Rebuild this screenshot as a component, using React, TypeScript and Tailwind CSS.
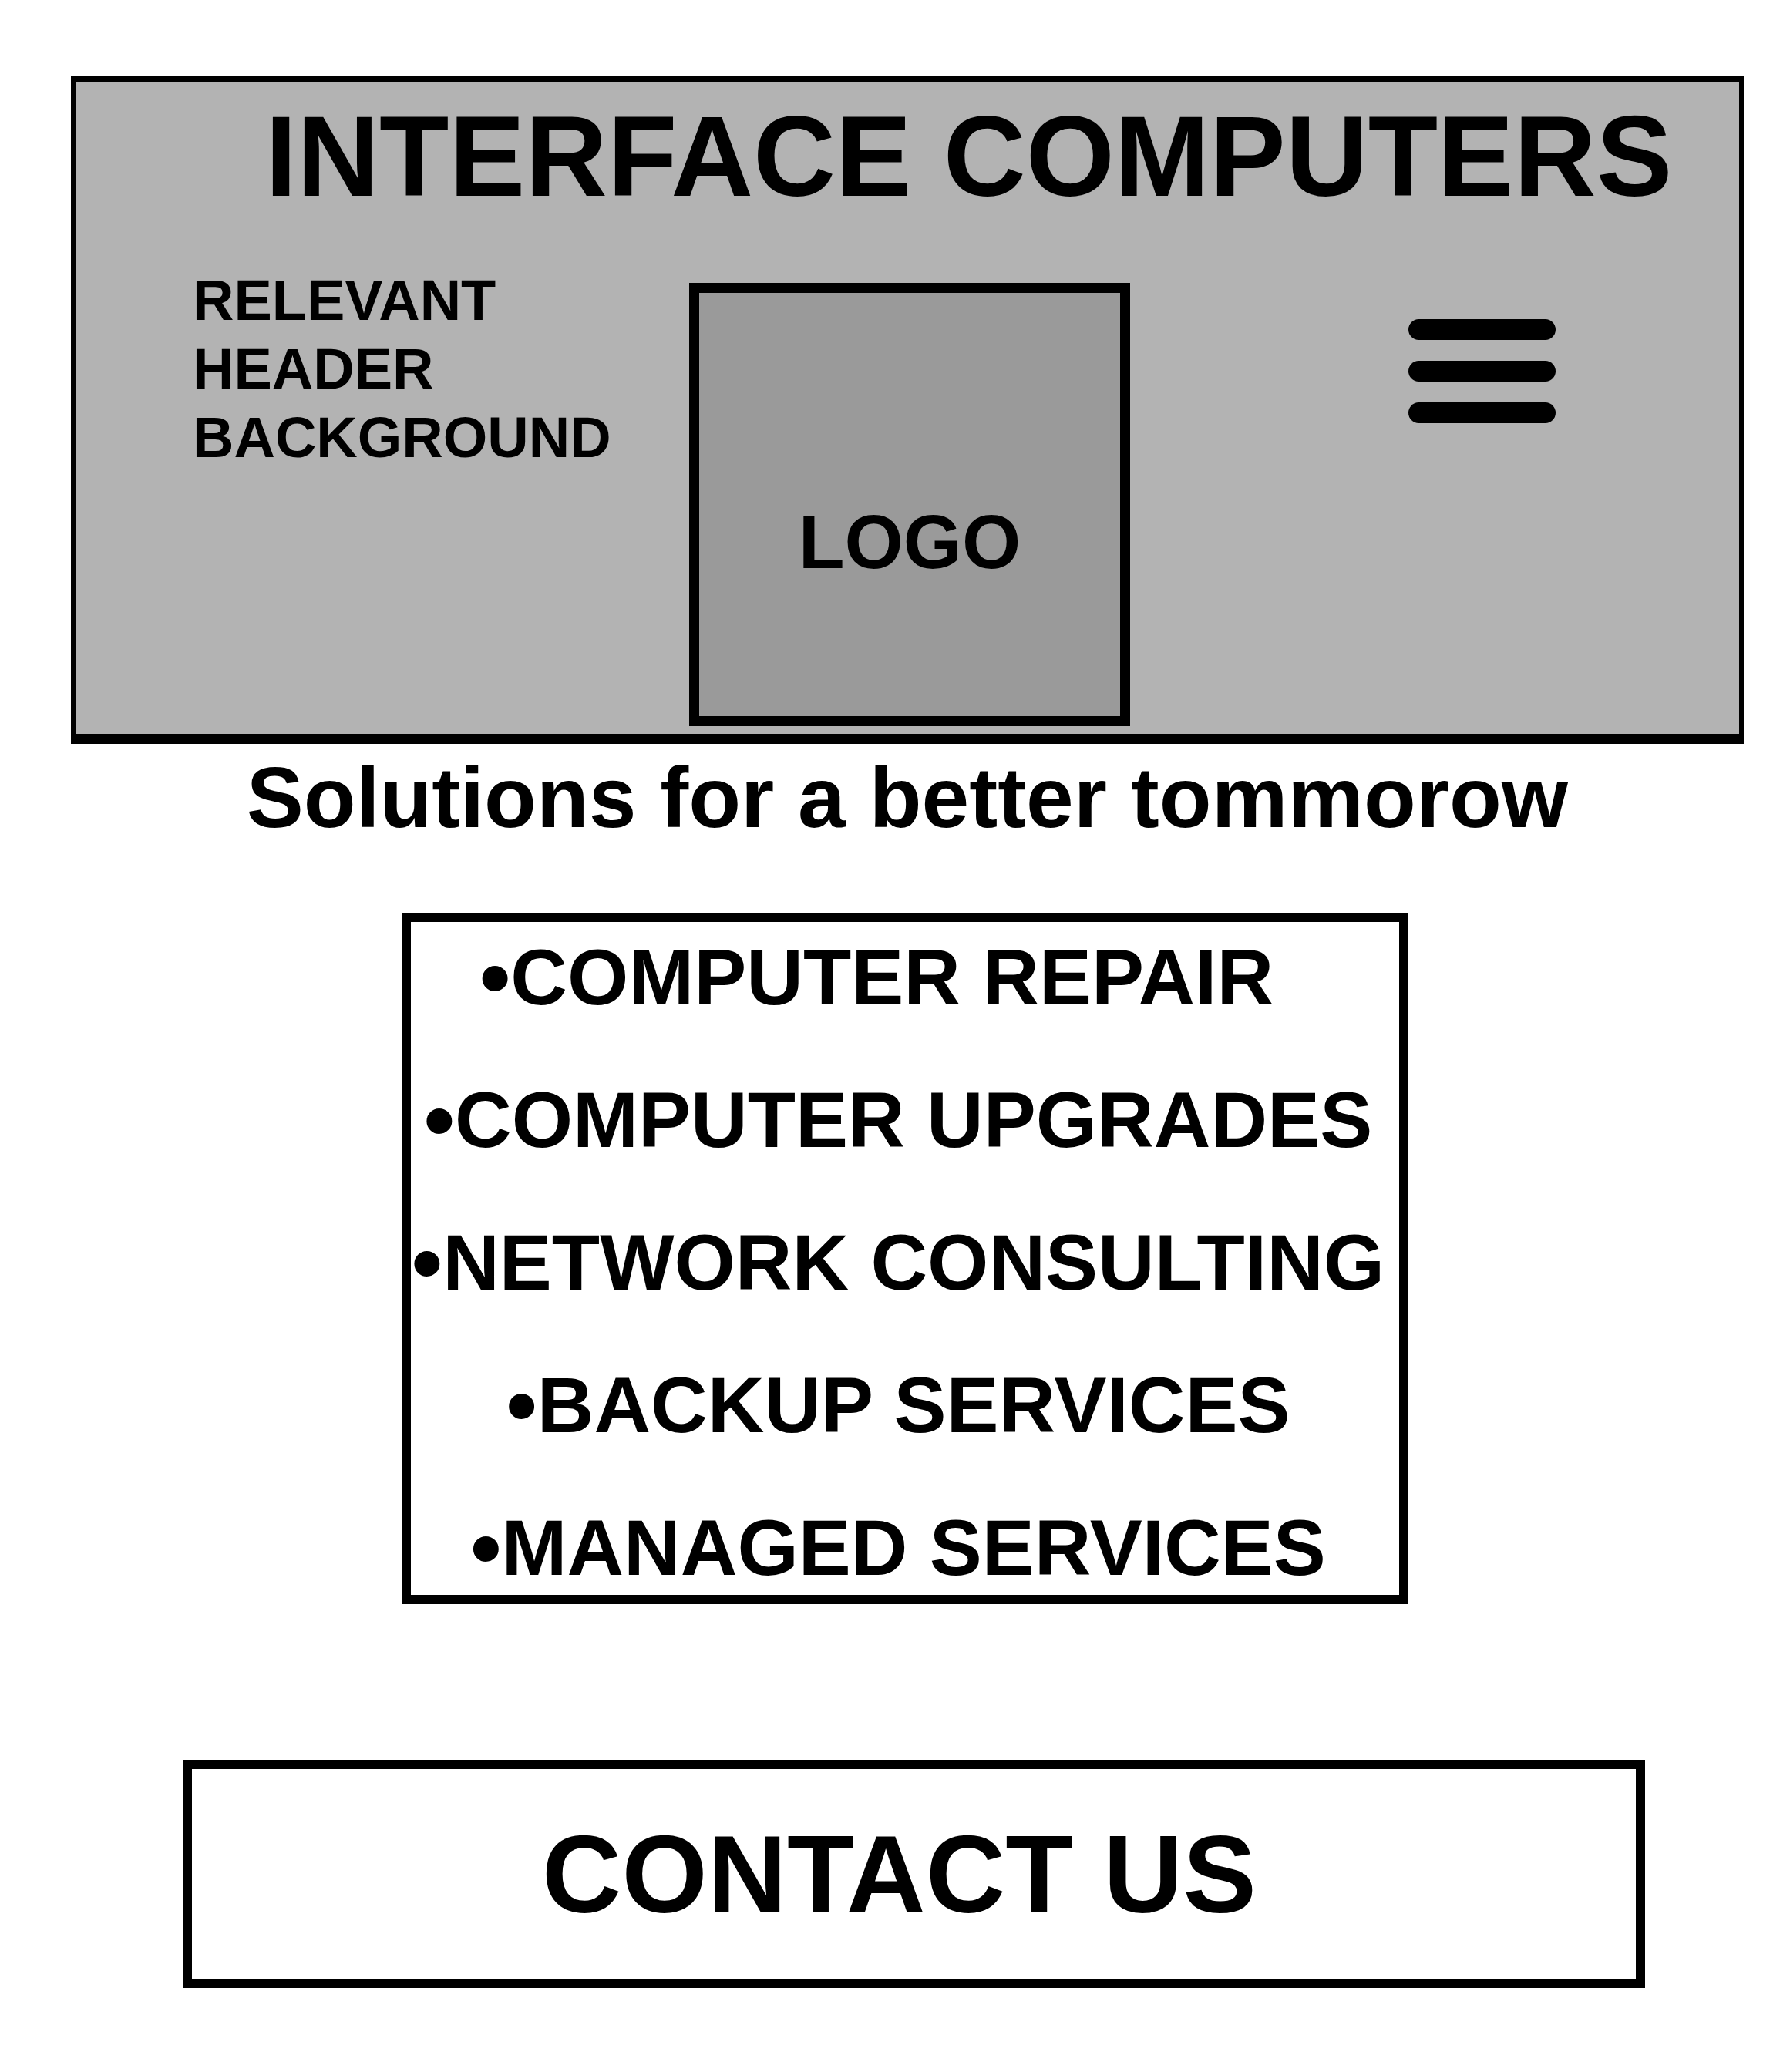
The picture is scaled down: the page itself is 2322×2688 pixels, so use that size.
const services = [
  { label: "COMPUTER REPAIR", extra: "pr-[56px]" },
  { label: "COMPUTER UPGRADES", extra: "" },
  { label: "NETWORK CONSULTING", extra: "" },
  { label: "BACKUP SERVICES", extra: "" },
  { label: "MANAGED SERVICES", extra: "" },
];

function Hamburger() {
  return (
    <div className="flex flex-col gap-[27px]">
      <div className="h-[27px] w-[191px] rounded-full bg-black" />
      <div className="h-[27px] w-[191px] rounded-full bg-black" />
      <div className="h-[27px] w-[191px] rounded-full bg-black" />
    </div>
  );
}

export default function App() {
  return (
    <div className="min-h-[2688px] w-[2322px] bg-white font-['Liberation_Sans',Arial,sans-serif] font-bold text-black">
      <div className="ml-[92px] w-[2170px] pt-[99px]">
        {/* header */}
        <header className="border-[6px] border-t-[8px] border-b-[13px] border-black bg-[#b3b3b3] pb-[10px]">
          <h1 className="pl-[246px] pt-[22px] text-[148px] leading-none whitespace-nowrap">
            INTERFACE COMPUTERS
          </h1>
          <div className="mt-[68px] flex items-start pl-[152px]">
            <p className="w-[644px] text-[74px] leading-[89px]">
              RELEVANT
              <br />
              HEADER
              <br />
              BACKGROUND
            </p>
            <div className="mt-[22px] flex h-[575px] w-[572px] flex-col items-center border-[13px] border-black bg-[#9a9a9a] pt-[274px]">
              <span className="text-[98px] leading-none">LOGO</span>
            </div>
            <div className="ml-[361px] mt-[69px]">
              <Hamburger />
            </div>
          </div>
        </header>

        <p className="mt-[15px] text-center text-[111px] leading-none whitespace-nowrap">
          Solutions for a better tommorow
        </p>
      </div>

      {/* services */}
      <ul className="ml-[521px] mt-[93px] flex h-[897px] w-[1306px] flex-col gap-[68px] border-[12px] border-black pr-[18px] pt-[14px] text-center">
        {services.map((s) => (
          <li key={s.label} className={`text-[102px] leading-[117px] whitespace-nowrap ${s.extra}`}>
            <span className="align-[-4px] text-[115px] leading-[0]">•</span>
            {s.label}
          </li>
        ))}
      </ul>

      {/* contact */}
      <div className="ml-[237px] mt-[202px] flex h-[296px] w-[1897px] items-center justify-center border-[12px] border-black pr-[38px]">
        <span className="text-[143px] leading-none">CONTACT US</span>
      </div>
    </div>
  );
}
